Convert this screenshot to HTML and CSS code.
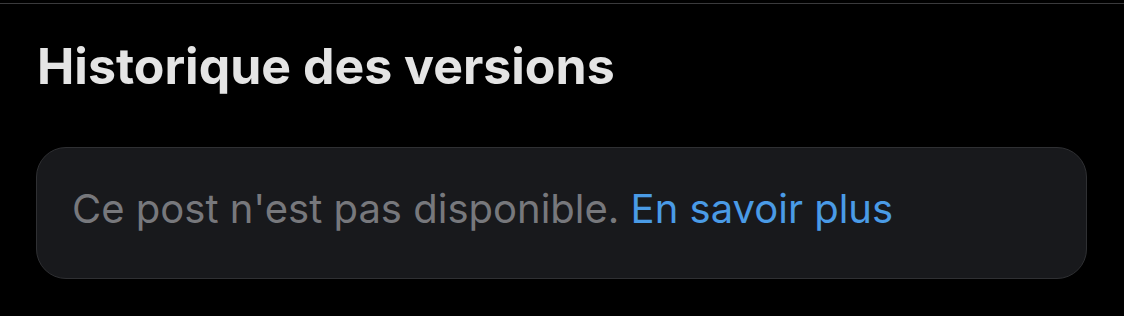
FILE: index.html
```html
<!DOCTYPE html>
<html lang="fr">
<head>
<meta charset="utf-8">
<link rel="stylesheet" href="styles.css">
</head>
<body>
<div class="topline"></div>
<main class="page">
  <h1 class="title">Historique des versions</h1>
  <div class="card">
    <p class="msg">Ce post n'est pas disponible. <a class="link" href="#">En savoir plus</a></p>
  </div>
</main>
</body>
</html>
```
FILE: styles.css
```css
html, body {
  margin: 0;
  padding: 0;
  background: #000;
  width: 1124px;
  height: 316px;
  overflow: hidden;
  font-family: Inter, "Liberation Sans", sans-serif;
}
.topline {
  height: 1px;
  margin-top: 3px;
  background: #3a3a3c;
}
.page {
  padding: 0 37px 0 36px;
}
.title {
  margin: 30px 0 0 1px;
  font-size: 50px;
  font-weight: 700;
  color: #e4e4e4;
  line-height: 64px;
  letter-spacing: 0;
}
.card {
  margin-top: 49px;
  height: 132px;
  box-sizing: border-box;
  border: 1px solid #2f3033;
  border-radius: 30px;
  background: #18191c;
  padding: 0 35px;
  display: flex;
  align-items: flex-start;
}
.msg {
  margin: 33px 0 0 0;
  font-size: 40px;
  line-height: 56px;
  color: #77787c;
  font-weight: 400;
}
.link {
  color: #4a9be6;
  text-decoration: none;
}
```
